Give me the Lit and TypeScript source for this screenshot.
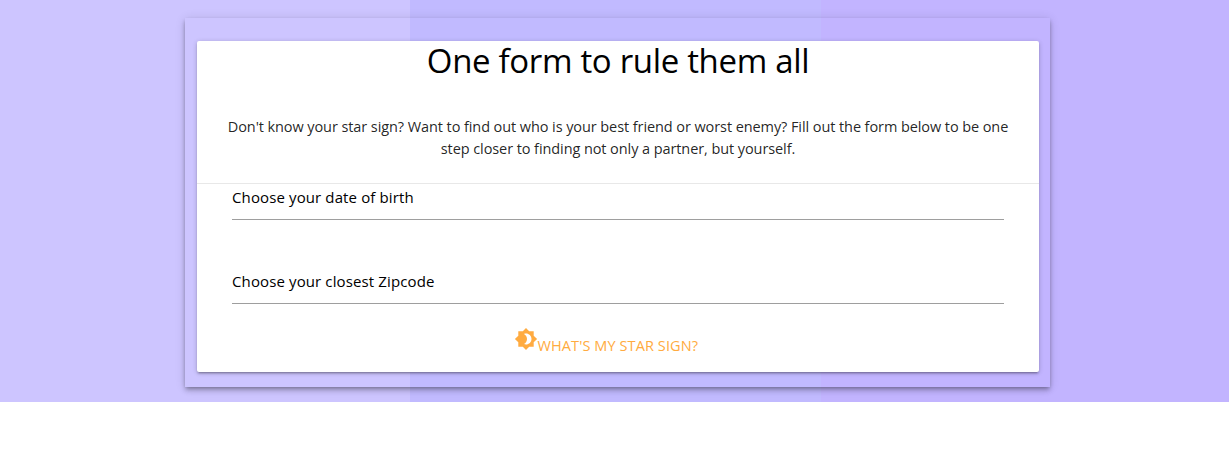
import { LitElement, html, css } from "lit";
import { customElement } from "lit/decorators.js";

@customElement("app-root")
export class AppRoot extends LitElement {
  static styles = css`
    :host { display: block; height: 460px; background: #fff; overflow: hidden; font-family: "Segoe UI", "Open Sans", "Noto Sans", sans-serif; color: rgba(0,0,0,.87); }
    * { box-sizing: border-box; }
    .band { height: 402px; padding-top: 18px; background: linear-gradient(90deg, #cdc5ff 0 410px, #c1baff 410px 821px, #c2b4ff 821px); }
    .panel { width: 865px; height: 369px; margin-left: 185px; padding: 23px 11px 15px 12px; box-shadow: 0 4px 5px 0 rgba(0,0,0,.14), 0 1px 10px 0 rgba(0,0,0,.12), 0 2px 4px -1px rgba(0,0,0,.3); }
    .card { height: 331px; background: #fff; border-radius: 2px; box-shadow: 0 2px 2px 0 rgba(0,0,0,.14), 0 3px 1px -2px rgba(0,0,0,.12), 0 1px 5px 0 rgba(0,0,0,.2); }
    .head { height: 143px; border-bottom: 1px solid #e8e8e8; text-align: center; }
    h1 { margin: 0; height: 75px; font-size: 33px; line-height: 39px; font-weight: 400; color: #000; white-space: nowrap; letter-spacing: -.33px; }
    p { margin: 0; font-size: 14.5px; line-height: 22px; white-space: nowrap; font-weight: 400; letter-spacing: -.085px; }
    .field { height: 36px; margin: 0 35px 48px; border-bottom: 1px solid #9e9e9e; font-size: 15px; line-height: 26px; color: #000; font-weight: 400; letter-spacing: .12px; }
    .action { display: flex; margin-left: 316.5px; margin-top: -25px; color: #ffab40; font-size: 14.5px; line-height: 38px; font-weight: 400; letter-spacing: .1px; white-space: nowrap; }
    svg { width: 24px; height: 24px; fill: #ffab40; }
  `;
  render() {
    return html`<main class="band"><section class="panel"><div class="card">
      <header class="head"><h1><span>One form to rule them all</span></h1>
      <p>Don't know your star sign? Want to find out who is your best friend or worst enemy? Fill out the form below to be one</p><p>step closer to finding not only a partner, but yourself.</p></header>
      <div class="field"><span>Choose your date of birth</span></div>
      <div class="field"><span>Choose your closest Zipcode</span></div>
      <div class="action"><svg viewBox="0 0 24 24"><path d="M19.7 8.8V4.3h-4.5L12 .9 8.8 4.3H4.3v4.5L.9 12l3.4 3.2v4.5h4.5l3.2 3.4 3.2-3.4h4.5v-4.5l3.4-3.2-3.4-3.2zM12 17.5c-.7 0-1.4-.15-2-.4C11.8 16.1 13 14.2 13 12s-1.2-4.1-3-5.1c.6-.25 1.3-.4 2-.4 3.04 0 5.5 2.46 5.5 5.5s-2.46 5.5-5.5 5.5z"/></svg><span>WHAT'S MY STAR SIGN?</span></div>
    </div></section></main>`;
  }
}
